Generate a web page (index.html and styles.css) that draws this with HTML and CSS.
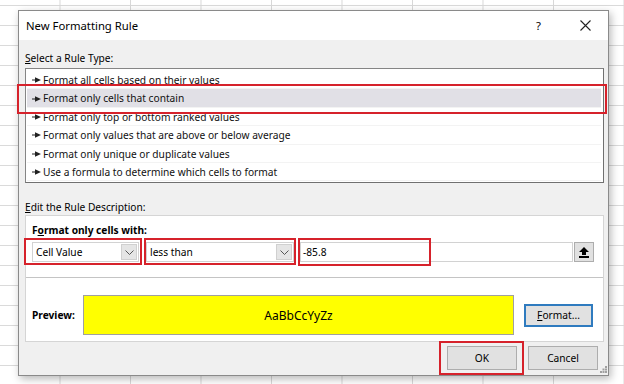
FILE: index.html
```html
<!DOCTYPE html>
<html lang="en">
<head>
    <meta charset="UTF-8">
    <title>New Formatting Rule</title>
    <link rel="stylesheet" href="styles.css">
</head>
<body>
    <div class="dialog">
        <div class="titlebar">
            <span class="title">New Formatting Rule</span>
            <span class="help">?</span>
            <svg class="close" width="11" height="11" viewBox="0 0 11 11">
                <path d="M0.5 0.5 L10.5 10.5 M10.5 0.5 L0.5 10.5" stroke="#222" stroke-width="1.1" fill="none"/>
            </svg>
        </div>
        <div class="content">
            <div class="label"><u>S</u>elect a Rule Type:</div>
            <ul class="rule-list">
                <li class="rule"><svg class="arrow" width="9" height="6" viewBox="0 0 9 6"><polygon points="0,2.4 3,2.4 3,0.3 9,3 3,5.7 3,3.6 0,3.6"/></svg>Format all cells based on their values</li>
                <li class="rule selected"><svg class="arrow" width="9" height="6" viewBox="0 0 9 6"><polygon points="0,2.4 3,2.4 3,0.3 9,3 3,5.7 3,3.6 0,3.6"/></svg>Format only cells that contain<span class="mark mark-rule"></span></li>
                <li class="rule"><svg class="arrow" width="9" height="6" viewBox="0 0 9 6"><polygon points="0,2.4 3,2.4 3,0.3 9,3 3,5.7 3,3.6 0,3.6"/></svg>Format only top or bottom ranked values</li>
                <li class="rule"><svg class="arrow" width="9" height="6" viewBox="0 0 9 6"><polygon points="0,2.4 3,2.4 3,0.3 9,3 3,5.7 3,3.6 0,3.6"/></svg>Format only values that are above or below average</li>
                <li class="rule"><svg class="arrow" width="9" height="6" viewBox="0 0 9 6"><polygon points="0,2.4 3,2.4 3,0.3 9,3 3,5.7 3,3.6 0,3.6"/></svg>Format only unique or duplicate values</li>
                <li class="rule"><svg class="arrow" width="9" height="6" viewBox="0 0 9 6"><polygon points="0,2.4 3,2.4 3,0.3 9,3 3,5.7 3,3.6 0,3.6"/></svg>Use a formula to determine which cells to format</li>
            </ul>
            <div class="label label-edit"><u>E</u>dit the Rule Description:</div>
            <div class="group">
                <div class="criteria">
                    <div class="criteria-title">F<u>o</u>rmat only cells with:</div>
                    <div class="criteria-row">
                        <div class="combo combo-type">
                            <span class="combo-text">Cell Value</span>
                            <span class="combo-btn"><svg width="9" height="5" viewBox="0 0 9 5"><path d="M0.5 0.5 L4.5 4.5 L8.5 0.5" stroke="#555" fill="none"/></svg></span>
                            <span class="mark mark-type"></span>
                        </div>
                        <div class="combo combo-op">
                            <span class="combo-text">less than</span>
                            <span class="combo-btn"><svg width="9" height="5" viewBox="0 0 9 5"><path d="M0.5 0.5 L4.5 4.5 L8.5 0.5" stroke="#555" fill="none"/></svg></span>
                            <span class="mark mark-op"></span>
                        </div>
                        <div class="value-input">
                            <span class="value-text">-85.8</span>
                            <span class="mark mark-value"></span>
                        </div>
                        <span class="collapse-btn"><svg width="10" height="11" viewBox="0 0 10 11"><polygon points="5,0 10,5 7,5 7,8 3,8 3,5 0,5"/><rect x="0" y="9" width="10" height="2"/></svg></span>
                    </div>
                </div>
                <div class="preview-row">
                    <span class="preview-label">Preview:</span>
                    <div class="preview-box">AaBbCcYyZz</div>
                    <button class="btn btn-format"><u>F</u>ormat...</button>
                </div>
            </div>
            <div class="actions">
                <button class="btn btn-ok">OK<span class="mark mark-ok"></span></button>
                <button class="btn">Cancel</button>
            </div>
        </div>
        <svg class="grip" width="7" height="7" viewBox="0 0 7 7" fill="#a0a0a0">
            <rect x="5" y="0" width="2" height="2"/>
            <rect x="2.5" y="2.5" width="2" height="2"/><rect x="5" y="2.5" width="2" height="2"/>
            <rect x="0" y="5" width="2" height="2"/><rect x="2.5" y="5" width="2" height="2"/><rect x="5" y="5" width="2" height="2"/>
        </svg>
    </div>
</body>
</html>
```

FILE: styles.css
```css
html, body{
    margin: 0;
    height: 100%;
}
body{
    font-family: "Noto Sans", "DejaVu Sans", sans-serif;
    font-size: 10.2px;
    color: #000;
    background-color: #fff;
    background-image:
        linear-gradient(to right, #d8d8d8 1px, transparent 1px),
        linear-gradient(to bottom, #dadada 1px, transparent 1px);
    background-size: 70.5px 100%, 100% 20px;
    background-position: 130px 0, 0 5px;
    overflow: hidden;
}
.dialog{
    position: relative;
    box-sizing: border-box;
    width: 591px;
    height: 366px;
    margin: 10px 0 0 18px;
    border: 1px solid #8a8a8a;
    background: #f0f0f0;
    box-shadow: 2px 3px 8px rgba(0, 0, 0, 0.28);
    display: flex;
    flex-direction: column;
}
.titlebar{
    height: 29px;
    background: #fff;
    display: flex;
    align-items: center;
    padding: 0 17px 0 7px;
}
.title{
    font-size: 11.3px;
}
.help{
    margin-left: auto;
    margin-right: 39px;
    font-size: 11.3px;
}
.content{
    padding: 0 4px 0 6px;
}
.label{
    height: 16px;
    line-height: 16px;
    margin-top: 10px;
    margin-bottom: 2px;
}
.label-edit{
    margin-top: 16px;
    margin-bottom: 0;
}
.rule-list{
    list-style: none;
    margin: 0;
    padding: 2px 2px 0 1px;
    height: 115px;
    box-sizing: border-box;
    border: 1px solid #858585;
    border-right-color: #707070;
    border-bottom-color: #707070;
    background: #fff;
}
.rule{
    position: relative;
    height: 18.4px;
    line-height: 18.4px;
    padding-left: 5px;
    display: flex;
    align-items: center;
    box-shadow: inset 0 -1px 0 #f3f3f3;
    color: #111;
}
.rule.selected{
    background: #e1e0e6;
}
.arrow{
    margin-right: 2px;
    fill: #222;
}
.mark{
    position: absolute;
    border: 2px solid #d6222b;
    pointer-events: none;
    z-index: 2;
}
.mark-rule{
    top: -5px;
    bottom: -6px;
    left: -10px;
    right: -6px;
}
.group{
    box-sizing: border-box;
    height: 127px;
    border: 1px solid #d5d5d5;
    background: #fff;
}
.criteria{
    height: 62px;
    box-sizing: border-box;
    border-bottom: 1px solid #c4c4c4;
    padding: 6px 0 0 6px;
}
.criteria-title{
    font-weight: bold;
    height: 16px;
    line-height: 16px;
}
.criteria-row{
    display: flex;
    margin-top: 4px;
}
.combo{
    position: relative;
    box-sizing: border-box;
    height: 20px;
    border: 1px solid #d2d2d2;
    display: flex;
    align-items: center;
    padding: 1px;
}
.combo-type{
    width: 107px;
    margin-right: 7px;
}
.combo-op{
    width: 148px;
    margin-right: 6px;
}
.combo-text{
    flex: 1;
    padding-left: 2px;
}
.combo-btn{
    box-sizing: border-box;
    width: 16px;
    height: 16px;
    background: #e5e5e5;
    border: 1px solid #d0d0d0;
    display: flex;
    align-items: center;
    justify-content: center;
}
.mark-type{
    top: -5px;
    bottom: -4px;
    left: -9px;
    right: -4px;
}
.mark-op{
    top: -5px;
    bottom: -4px;
    left: -3px;
    right: -3px;
}
.value-input{
    position: relative;
    box-sizing: border-box;
    width: 273px;
    height: 20px;
    border: 1px solid #d2d2d2;
    display: flex;
    align-items: center;
    padding-left: 2px;
}
.mark-value{
    top: -5px;
    bottom: -5px;
    left: -3px;
    width: 129px;
}
.collapse-btn{
    box-sizing: border-box;
    width: 20px;
    height: 20px;
    margin-left: 1px;
    background: #e1e1e1;
    border: 1px solid #adadad;
    display: flex;
    align-items: center;
    justify-content: center;
    fill: #000;
}
.preview-row{
    display: flex;
    align-items: center;
    padding: 17px 0 0 6px;
}
.preview-label{
    width: 51px;
    font-weight: bold;
}
.preview-box{
    box-sizing: border-box;
    width: 431px;
    height: 40px;
    border: 1px solid #a0a0a0;
    background: #ffff00;
    display: flex;
    align-items: center;
    justify-content: center;
    font-size: 12px;
}
.btn{
    position: relative;
    box-sizing: border-box;
    height: 24px;
    width: 70px;
    font: inherit;
    color: #000;
    background: #e1e1e1;
    border: 1px solid #adadad;
    padding: 0;
}
.btn-format{
    width: 69px;
    height: 23px;
    margin-left: 10px;
    border: 2px solid #2f7bbf;
}
.actions{
    display: flex;
    justify-content: flex-end;
    gap: 11px;
    margin-top: 4px;
    padding-right: 6px;
}
.mark-ok{
    top: -6px;
    bottom: -6px;
    left: -9px;
    right: -8px;
}
.grip{
    position: absolute;
    right: 1px;
    bottom: 2px;
}
```
